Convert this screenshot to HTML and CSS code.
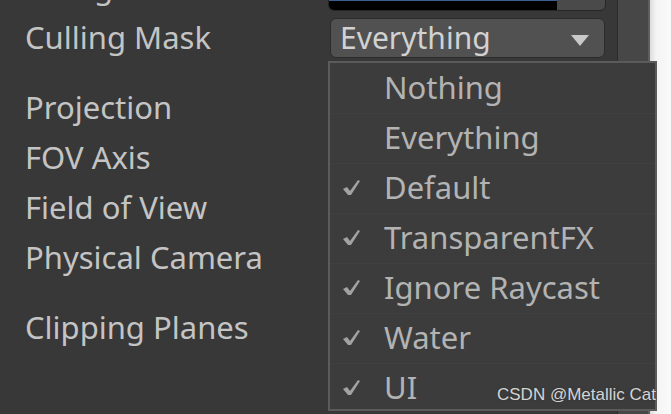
FILE: index.html
```html
<!DOCTYPE html>
<html lang="en">
<head>
  <meta charset="UTF-8">
  <title>Camera Inspector</title>
  <link rel="stylesheet" href="styles.css">
</head>
<body>
  <div class="inspector">
    <div class="rows">
      <div class="row">
        <span class="label">Background</span>
        <div class="color-field">
          <div class="swatch"></div>
          <div class="picker"></div>
        </div>
      </div>
      <div class="row">
        <span class="label">Culling Mask</span>
        <div class="dropdown">
          <span>Everything</span>
          <svg class="arrow" width="18" height="11" viewBox="0 0 18 11"><path d="M0 0 H18 L9 11 Z" fill="#c9c9c9"/></svg>
        </div>
      </div>
      <div class="row spaced"><span class="label">Projection</span></div>
      <div class="row"><span class="label">FOV Axis</span></div>
      <div class="row"><span class="label">Field of View</span></div>
      <div class="row"><span class="label">Physical Camera</span></div>
      <div class="row spaced"><span class="label">Clipping Planes</span></div>
    </div>

    <ul class="menu">
      <li><span class="check"></span>Nothing</li>
      <li><span class="check"></span>Everything</li>
      <li><span class="check"><svg width="20" height="18" viewBox="0 0 20 18"><path d="M2 11 L6 9 L9 13 L17 2 L19 3 L10 17 L7 17 Z" fill="#a2a2a2"/></svg></span>Default</li>
      <li><span class="check"><svg width="20" height="18" viewBox="0 0 20 18"><path d="M2 11 L6 9 L9 13 L17 2 L19 3 L10 17 L7 17 Z" fill="#a2a2a2"/></svg></span>TransparentFX</li>
      <li><span class="check"><svg width="20" height="18" viewBox="0 0 20 18"><path d="M2 11 L6 9 L9 13 L17 2 L19 3 L10 17 L7 17 Z" fill="#a2a2a2"/></svg></span>Ignore Raycast</li>
      <li><span class="check"><svg width="20" height="18" viewBox="0 0 20 18"><path d="M2 11 L6 9 L9 13 L17 2 L19 3 L10 17 L7 17 Z" fill="#a2a2a2"/></svg></span>Water</li>
      <li><span class="check"><svg width="20" height="18" viewBox="0 0 20 18"><path d="M2 11 L6 9 L9 13 L17 2 L19 3 L10 17 L7 17 Z" fill="#a2a2a2"/></svg></span>UI</li>
    </ul>

    <div class="watermark">CSDN @Metallic Cat</div>
  </div>
  <div class="scrollbar"></div>
  <div class="outside"></div>
</body>
</html>
```

FILE: styles.css
```css
body {
  margin: 0;
  width: 671px;
  height: 414px;
  overflow: hidden;
  display: flex;
  background-color: #383838;
  font-family: 'Noto Sans', 'Open Sans', sans-serif;
}

.inspector {
  position: relative;
  width: 617px;
  height: 414px;
  border-right: 1px solid #2c2c2c;
}

.rows {
  margin-top: -38px;
}

.row {
  height: 50px;
  display: flex;
  align-items: center;
  padding-left: 25px;
}

.row.spaced {
  margin-top: 20px;
}

.label {
  width: 305px;
  font-size: 31px;
  color: #c4c4c4;
  white-space: nowrap;
}

.color-field {
  display: flex;
  width: 276px;
  height: 40px;
  margin-left: -2px;
  border: 1px solid #262626;
  border-radius: 6px;
  overflow: hidden;
  align-self: flex-start;
  margin-top: 7px;
}

.swatch {
  flex: 1;
  background: linear-gradient(#000 29px, #3a5d92 29px, #3a5d92 31px, #000 31px);
}

.picker {
  width: 48px;
  background: #4a4a4a;
}

.dropdown {
  display: flex;
  align-items: center;
  justify-content: space-between;
  width: 275px;
  height: 40px;
  padding: 0 15px 0 9px;
  box-sizing: border-box;
  background: #515151;
  border: 1px solid #2c2c2c;
  border-radius: 6px;
  font-size: 30px;
  color: #d2d2d2;
  margin-top: 2px;
}

.dropdown span {
  line-height: 38px;
}

.arrow {
  margin-top: 4px;
}

.menu {
  position: absolute;
  left: 328px;
  top: 61px;
  width: 325px;
  height: 346px;
  margin: 0;
  padding: 0;
  list-style: none;
  background: #3c3c3c;
  border: 2px solid #5b5b5b;
}

.menu li {
  height: 50px;
  display: flex;
  align-items: center;
  font-size: 31px;
  color: #b3b3b3;
  border-top: 1px solid #404040;
  box-sizing: border-box;
  padding-bottom: 3px;
}

.menu li:first-child {
  border-top: none;
}

.check {
  width: 43px;
  padding-left: 11px;
  display: flex;
  align-items: center;
}

.watermark {
  position: absolute;
  left: 497px;
  top: 385px;
  white-space: nowrap;
  font-family: 'Liberation Sans', Arial, sans-serif;
  font-size: 17px;
  color: #d4d4d4;
  text-shadow: 0 0 2px #333;
}

.scrollbar {
  width: 30px;
  background: #474747;
  border-right: 2px solid #5e5e5e;
}

.outside {
  flex: 1;
  background: linear-gradient(90deg, #dcdcdc, #f4f4f4 6px, #fafafa);
}
```
